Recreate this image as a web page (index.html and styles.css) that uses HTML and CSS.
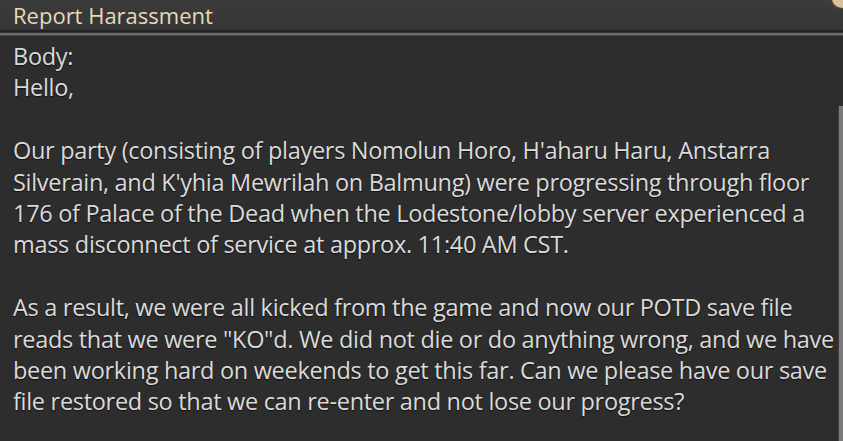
FILE: index.html
```html
<!DOCTYPE html>
<html>
<head>
  <title>Report Harassment</title>
  <link rel="stylesheet" href="styles.css">
</head>
<body>
  <div class="window">
    <div class="titlebar">
      <span class="title">Report Harassment</span>
      <span class="close-btn"></span>
    </div>
    <div class="body">
      <div class="content">
        <p>Body:<br>Hello,</p>
        <p>Our party (consisting of players Nomolun Horo, H'aharu Haru, Anstarra<br>Silverain, and K'yhia Mewrilah on Balmung) were progressing through floor<br>176 of Palace of the Dead when the Lodestone/lobby server experienced a<br>mass disconnect of service at approx. 11:40 AM CST.</p>
        <p>As a result, we were all kicked from the game and now our POTD save file<br>reads that we were "KO"d. We did not die or do anything wrong, and we have<br>been working hard on weekends to get this far. Can we please have our save<br>file restored so that we can re-enter and not lose our progress?</p>
      </div>
      <div class="scrollbar"></div>
    </div>
  </div>
</body>
</html>
```

FILE: styles.css
```css
body {
  margin: 0;
  background-color: #2d2d2d;
  font-family: "Open Sans", "Noto Sans", sans-serif;
  overflow: hidden;
}

.window {
  width: 843px;
  height: 441px;
  display: flex;
  flex-direction: column;
  overflow: hidden;
}

.titlebar {
  position: relative;
  height: 37px;
  padding-left: 13px;
  background: linear-gradient(#3b3b3b, #363636);
  border-bottom: 2px solid #222;
  box-shadow: 0 1px 0 #333, 0 3px 0 #6c6c6c, 0 4px 0 #4a4a4a;
  margin-bottom: 4px;
}

.title {
  display: block;
  font-size: 22px;
  line-height: normal;
  color: #e6d9bd;
}

.close-btn {
  position: absolute;
  top: -12px;
  right: -9px;
  width: 20px;
  height: 20px;
  border-radius: 50%;
  background: #d8c29e;
  box-shadow: -1px 1px 1px #5a4a30;
}

.body {
  flex: 1;
  display: flex;
}

.content {
  flex: 1;
  padding: 5px 0 0 13px;
  color: #dadada;
  font-size: 23.5px;
  line-height: 31.4px;
  letter-spacing: -0.3px;
  text-shadow: 0 1px 1px #111;
  white-space: nowrap;
}

.content p {
  margin: 0 0 31.4px;
}

.scrollbar {
  width: 4px;
  margin-top: 70px;
  background: #7a7a7a;
  border-left: 1px solid #3e3e3e;
}
```
